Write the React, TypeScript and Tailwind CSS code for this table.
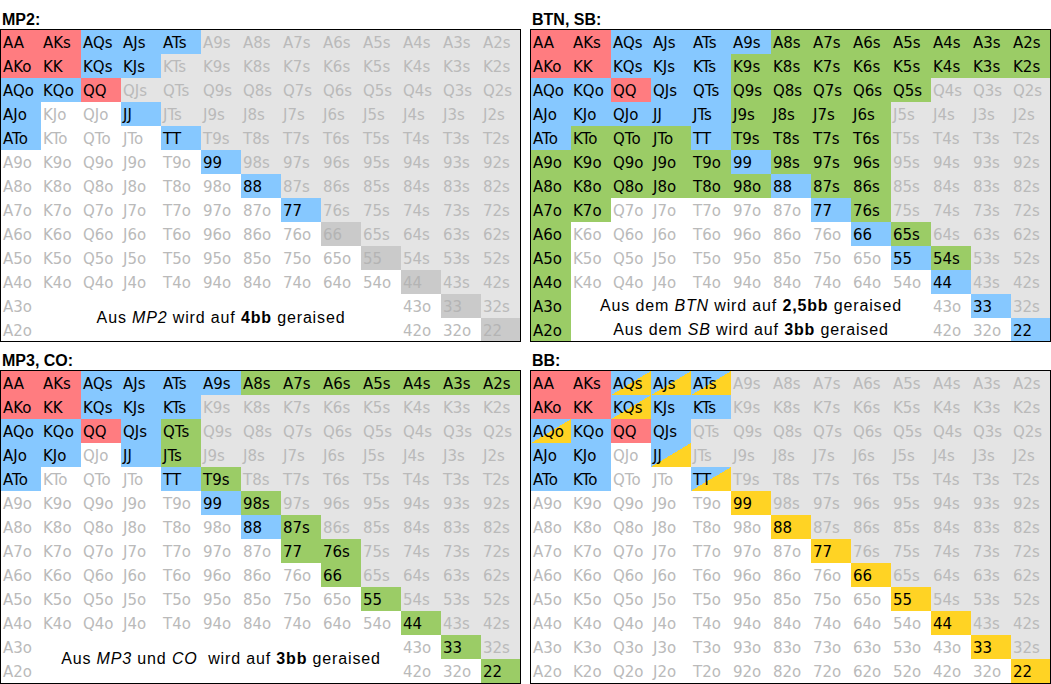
import React from "react";

const RANKS = ["A", "K", "Q", "J", "T", "9", "8", "7", "6", "5", "4", "3", "2"];

function handName(i: number, j: number): string {
  if (i === j) return RANKS[i] + RANKS[i];
  if (j > i) return RANKS[i] + RANKS[j] + "s";
  return RANKS[j] + RANKS[i] + "o";
}

const COLORS: Record<string, string> = {
  R: "bg-[#ff7c80] text-black",
  B: "bg-[#86c8ff] text-black",
  G: "bg-[#9bcc66] text-black",
  Y: "bg-[#ffd324] text-black",
  X: "bg-[linear-gradient(to_bottom_right,#86c8ff_50%,#ffd324_50%)] text-black",
  D: "bg-[#cacaca] text-[#b4b4b4]",
  U: "bg-[#e4e4e4] text-[#bababa]",
  L: "bg-white text-[#bababa]",
};

type Caption = {
  cls: string;
  content: React.ReactNode;
};

type PanelDef = {
  title: string;
  rows: string[];
  captions: Caption[];
  covered: boolean;
};

const captionBase =
  "col-start-2 col-span-9 flex items-center justify-center bg-white text-black font-['Liberation_Sans',Arial,sans-serif] text-[16px] tracking-[0.85px] whitespace-pre leading-[18px]";

const PANELS: PanelDef[] = [
  {
    title: "MP2:",
    rows: [
      "RRBBB........",
      "RRBB.........",
      "BBR..........",
      "B..B.........",
      "B...B........",
      ".....B.......",
      "......B......",
      ".......B.....",
      "........D....",
      ".........D...",
      "..........D..",
      "...........D.",
      "............D",
    ],
    covered: true,
    captions: [
      {
        cls: "row-start-12 row-span-2",
        content: (
          <span>
            Aus <i>MP2</i> wird auf <b>4bb</b> geraised
          </span>
        ),
      },
    ],
  },
  {
    title: "BTN, SB:",
    rows: [
      "RRBBBBGGGGGGG",
      "RRBBBGGGGGGGG",
      "BBRBBGGGGG...",
      "BBBBBGGGG....",
      "BGGGBGGGG....",
      "GGGGGBGGG....",
      "GGGGGGBGG....",
      "GG.....BG....",
      "G.......BG...",
      "G........BG..",
      "G.........B..",
      "G..........B.",
      "G...........B",
    ],
    covered: true,
    captions: [
      {
        cls: "row-start-12 row-span-1",
        content: (
          <span>
            Aus dem <i>BTN</i> wird auf <b>2,5bb</b> geraised
          </span>
        ),
      },
      {
        cls: "row-start-13 row-span-1",
        content: (
          <span>
            Aus dem <i>SB</i> wird auf <b>3bb</b> geraised
          </span>
        ),
      },
    ],
  },
  {
    title: "MP3, CO:",
    rows: [
      "RRBBBBGGGGGGG",
      "RRBBB........",
      "BBRBG........",
      "BB.BG........",
      "B...BG.......",
      ".....BG......",
      "......BG.....",
      ".......GG....",
      "........G....",
      ".........G...",
      "..........G..",
      "...........G.",
      "............G",
    ],
    covered: true,
    captions: [
      {
        cls: "row-start-12 row-span-2",
        content: (
          <span>
            Aus <i>MP3</i> und <i>CO</i>{"  "}wird auf <b>3bb</b> geraised
          </span>
        ),
      },
    ],
  },
  {
    title: "BB:",
    rows: [
      "RRXXX........",
      "RRXBB........",
      "XBRB.........",
      "BB.X.........",
      "BB..X........",
      ".....Y.......",
      "......Y......",
      ".......Y.....",
      "........Y....",
      ".........Y...",
      "..........Y..",
      "...........Y.",
      "............Y",
    ],
    covered: false,
    captions: [],
  },
];

function Panel({ def, top }: { def: PanelDef; top: boolean }) {
  const cells: React.ReactNode[] = [];
  for (let i = 0; i < 13; i++) {
    for (let j = 0; j < 13; j++) {
      if (def.covered && i >= 11 && j >= 1 && j <= 9) continue;
      const code = def.rows[i][j];
      const key = code === "." ? (j >= i ? "U" : "L") : code;
      cells.push(
        <div
          key={`${i}-${j}`}
          className={`pl-[2px] leading-[26px] whitespace-nowrap ${COLORS[key]}`}
        >
          {handName(i, j)}
        </div>
      );
    }
  }
  return (
    <div className="flex flex-col">
      <div
        className={`${top ? "h-[29px]" : "h-[28px]"} flex items-end pl-[2px] font-['Liberation_Sans',Arial,sans-serif] font-bold text-[16px] leading-[18px] text-black`}
      >
        {def.title}
      </div>
      <div className="border border-black">
        <div
          className={`grid grid-cols-[repeat(12,40px)_39px] ${top ? "grid-rows-[repeat(12,24px)_23px]" : "grid-rows-[repeat(13,24px)]"} font-['DejaVu_Sans',Verdana,sans-serif] text-[15px]`}
        >
          {def.captions.map((c, k) => (
            <div key={`cap-${k}`} className={`${captionBase} ${c.cls}`}>
              {c.content}
            </div>
          ))}
          {cells}
        </div>
      </div>
    </div>
  );
}

export default function App() {
  return (
    <div className="w-[1051px] h-[684px] overflow-hidden bg-white">
      <div className="grid grid-cols-[521px_521px] gap-x-[9px]">
        <Panel def={PANELS[0]} top />
        <Panel def={PANELS[1]} top />
        <Panel def={PANELS[2]} top={false} />
        <Panel def={PANELS[3]} top={false} />
      </div>
    </div>
  );
}
